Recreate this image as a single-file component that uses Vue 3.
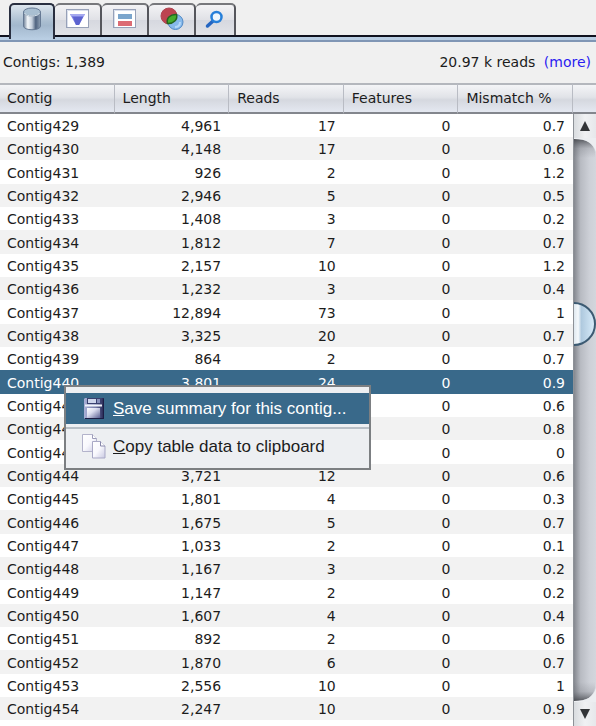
<script setup>
import { ref } from 'vue'

const tabs = ['Contigs', 'Filter', 'Features', 'Colours', 'Find']
const activeTab = ref(0)

const columns = ['Contig', 'Length', 'Reads', 'Features', 'Mismatch %']
const rows = ref([
  [429, '4,961', 17, 0, '0.7'],
  [430, '4,148', 17, 0, '0.6'],
  [431, '926', 2, 0, '1.2'],
  [432, '2,946', 5, 0, '0.5'],
  [433, '1,408', 3, 0, '0.2'],
  [434, '1,812', 7, 0, '0.7'],
  [435, '2,157', 10, 0, '1.2'],
  [436, '1,232', 3, 0, '0.4'],
  [437, '12,894', 73, 0, '1'],
  [438, '3,325', 20, 0, '0.7'],
  [439, '864', 2, 0, '0.7'],
  [440, '3,801', 24, 0, '0.9'],
  [441, '', '', 0, '0.6'],
  [442, '', '', 0, '0.8'],
  [443, '', '', 0, '0'],
  [444, '3,721', 12, 0, '0.6'],
  [445, '1,801', 4, 0, '0.3'],
  [446, '1,675', 5, 0, '0.7'],
  [447, '1,033', 2, 0, '0.1'],
  [448, '1,167', 3, 0, '0.2'],
  [449, '1,147', 2, 0, '0.2'],
  [450, '1,607', 4, 0, '0.4'],
  [451, '892', 2, 0, '0.6'],
  [452, '1,870', 6, 0, '0.7'],
  [453, '2,556', 10, 0, '1'],
  [454, '2,247', 10, 0, '0.9'],
])
const selected = ref(440)
</script>

<template>
  <main class="pane">
    <nav class="tabs" role="tablist">
      <button
        v-for="(name, i) in tabs"
        :key="name"
        class="tab"
        :class="{ active: i === activeTab }"
        role="tab"
        type="button"
        :aria-label="name"
        :aria-selected="i === activeTab"
        @click="activeTab = i"
      >
        <svg v-if="i === 0" width="20" height="24" viewBox="0 0 20 24">
          <defs>
            <linearGradient id="cyl">
              <stop offset="0" stop-color="#6d7f97" />
              <stop offset=".25" stop-color="#f4f8fb" />
              <stop offset=".5" stop-color="#c3cedb" />
              <stop offset=".72" stop-color="#4f637f" />
              <stop offset="1" stop-color="#8fa0b4" />
            </linearGradient>
          </defs>
          <path d="M1.5 5v14c0 5 17 5 17 0V5z" fill="url(#cyl)" stroke="#667a94" />
          <ellipse cx="10" cy="5" rx="8.500" ry="4" fill="#a9bfd1" stroke="#667a94" />
          <path d="M2.500 6c1 4 14 4 15 0" fill="none" stroke="#dbe7ef" />
        </svg>
        <svg v-else-if="i === 1" width="24" height="20" viewBox="0 0 24 20">
          <rect x=".5" y=".5" width="22" height="18" fill="#fff" stroke="#97a1b8" />
          <path d="M1.500 18V1.500H22" fill="none" stroke="#d9dfec" />
          <path d="M4 5h15l-6 11h-3z" fill="#7d82e4" />
          <path d="M7 8h10l-4 8h-3z" fill="#5c63cf" />
          <path d="M4 5h15l-1 2H5z" fill="#a5a9ee" />
        </svg>
        <svg v-else-if="i === 2" width="24" height="20" viewBox="0 0 24 20">
          <rect x=".5" y=".5" width="22" height="18" fill="#fff" stroke="#97a1b8" />
          <path d="M1.500 18V1.500H22" fill="none" stroke="#d9dfec" />
          <rect x="5" y="5" width="14" height="5" fill="#7ba5cc" />
          <rect x="5" y="12" width="14" height="5" fill="#dc6b73" />
        </svg>
        <svg v-else-if="i === 3" width="24" height="24" viewBox="0 0 24 24">
          <circle cx="9" cy="9" r="8" fill="#bd4450" stroke="#b04552" />
          <circle cx="15.500" cy="15" r="7.500" fill="#86b9eb" stroke="#5089c6" />
          <path d="M7.500 16.500C6 11 10.500 7 16.500 7.500c1.500 5-3 9.500-9 9z" fill="#44ac2d" stroke="#24651f" stroke-width="1.500" />
          <path d="M15 20c3 0 5-2 5-5" fill="none" stroke="#b4d8f8" stroke-width="2" />
        </svg>
        <svg v-else width="20" height="19" viewBox="0 0 20 19">
          <path d="M2.500 16l5.500-5" stroke="#2465c1" stroke-width="3.500" stroke-linecap="round" />
          <circle cx="11.500" cy="7" r="5" fill="#eef6fd" stroke="#267fd9" stroke-width="2.500" />
        </svg>
      </button>
    </nav>

    <header class="summary">
      <span>Contigs: 1,389</span>
      <span class="reads">20.97 k reads <a href="#more">(more)</a></span>
    </header>

    <section class="listing">
      <table>
        <thead>
          <tr>
            <th v-for="c in columns" :key="c" scope="col">{{ c }}</th>
          </tr>
        </thead>
        <tbody>
          <tr
            v-for="r in rows"
            :key="r[0]"
            :class="{ selected: r[0] === selected }"
            @click="selected = r[0]"
          >
            <td>Contig{{ r[0] }}</td>
            <td>{{ r[1] }}</td>
            <td>{{ r[2] }}</td>
            <td>{{ r[3] }}</td>
            <td>{{ r[4] }}</td>
          </tr>
        </tbody>
      </table>

      <div class="side">
        <div class="corner"></div>
        <div class="scrollbar">
          <button class="step" type="button" aria-label="Scroll up">
            <svg width="12" height="12" viewBox="0 0 12 12"><path d="M6 1l5 10H1z" fill="#333538" /></svg>
          </button>
          <div class="track">
            <svg class="cap" width="22" height="20" viewBox="0 0 22 20">
              <defs>
                <linearGradient id="shade-top" x2="0" y2="1">
                  <stop offset="0" stop-color="#3c3e43" stop-opacity=".8" />
                  <stop offset=".5" stop-color="#5c5f66" stop-opacity=".2" />
                  <stop offset="1" stop-color="#5c5f66" stop-opacity="0" />
                </linearGradient>
              </defs>
              <path d="M0 1c13 0 19 4 21 13v6H0z" fill="url(#shade-top)" />
              <path d="M0 0h22v14C19 5 13 1 0 1z" fill="#eceef1" />
            </svg>
            <svg class="thumb" width="22" height="44" viewBox="0 0 22 44">
              <defs>
                <linearGradient id="knob">
                  <stop offset="0" stop-color="#dfe8ef" />
                  <stop offset=".2" stop-color="#f5f9fc" />
                  <stop offset=".35" stop-color="#afc9de" />
                  <stop offset="1" stop-color="#d9edfb" />
                </linearGradient>
              </defs>
              <path d="M0 1c11 0 21 9 21 21S11 43 0 43z" fill="url(#knob)" />
              <path d="M0 1c11 0 21 9 21 21S11 43 0 43" fill="none" stroke="#3c5a72" stroke-width="2" />
            </svg>
            <svg class="cap" width="22" height="20" viewBox="0 0 22 20">
              <defs>
                <linearGradient id="shade-bottom" x2="0" y2="1">
                  <stop offset="0" stop-color="#5c5f66" stop-opacity="0" />
                  <stop offset=".5" stop-color="#5c5f66" stop-opacity=".2" />
                  <stop offset="1" stop-color="#3c3e43" stop-opacity=".8" />
                </linearGradient>
              </defs>
              <path d="M0 0h21v6c-2 9-8 13-21 13z" fill="url(#shade-bottom)" />
              <path d="M0 20h22V6C19 15 13 19 0 19z" fill="#eceef1" />
            </svg>
          </div>
          <button class="step" type="button" aria-label="Scroll down">
            <svg width="12" height="12" viewBox="0 0 12 12"><path d="M6 11L1 1h10z" fill="#333538" /></svg>
          </button>
        </div>
      </div>
    </section>

    <div class="menu" role="menu">
      <button class="item current" role="menuitem" type="button">
        <svg class="disk" width="20" height="21" viewBox="0 0 20 21">
          <defs>
            <linearGradient id="disk">
              <stop offset="0" stop-color="#a9b0d6" />
              <stop offset=".6" stop-color="#7379a6" />
              <stop offset="1" stop-color="#20224f" />
            </linearGradient>
            <linearGradient id="label" x2="1" y2="1">
              <stop offset="0" stop-color="#fff" />
              <stop offset=".4" stop-color="#dcdef0" />
              <stop offset="1" stop-color="#5a5f92" />
            </linearGradient>
          </defs>
          <path d="M1 0h19v21H1L0 20V1z" fill="url(#disk)" />
          <path d="M19.500 1v19.500H1" fill="none" stroke="#1c1d45" />
          <rect x="3" y="0" width="14" height="6" fill="#39406f" />
          <rect x="4" y="1" width="8" height="4" fill="#cfd6ec" />
          <rect x="13" y="1" width="3" height="4" fill="#8890bb" />
          <path d="M1 7.500h17" stroke="#f0f3fb" stroke-width="2" />
          <rect x="3" y="10" width="13" height="10" fill="url(#label)" />
        </svg>
        <span><u>S</u>ave summary for this contig...</span>
      </button>
      <hr />
      <button class="item" role="menuitem" type="button">
        <svg width="24" height="25" viewBox="0 0 24 25">
          <defs>
            <linearGradient id="sheet" x2="1" y2="1">
              <stop offset="0" stop-color="#fff" />
              <stop offset=".5" stop-color="#f8f8fd" />
              <stop offset="1" stop-color="#c9c9e2" />
            </linearGradient>
          </defs>
          <path d="M.5.500h10l4 4v13H.5z" fill="url(#sheet)" stroke="#b3b3cb" />
          <path d="M10.500.500v4h4" fill="#fff" stroke="#9c9cb9" />
          <path d="M10.500 7.500h8l4.500 4.500v12H10.500z" fill="url(#sheet)" stroke="#a9a9c6" />
          <path d="M18.500 7.500V12H23" fill="#fff" stroke="#8888ab" />
        </svg>
        <span><u>C</u>opy table data to clipboard</span>
      </button>
    </div>
  </main>
</template>

<style>
body {
  margin: 0;
  background: #fff;
}
</style>

<style scoped>
.pane {
  position: relative;
  display: flex;
  flex-direction: column;
  min-height: 100vh;
  font-family: "DejaVu Sans", sans-serif;
  font-size: 14px;
  color: #1c1c1c;
}
button {
  margin: 0;
  padding: 0;
  border: 0;
  background: none;
  font: inherit;
  color: inherit;
}
svg {
  display: block;
  flex: none;
}
.tabs {
  display: flex;
  align-items: flex-start;
  height: 42px;
  box-sizing: border-box;
  padding: 3px 0 0 9px;
  background: linear-gradient(#f0f0f0 35px, #10121e 35px, #10121e 37px, #b9cee3 37px, #b9cee3 40px, #8096b5 40px);
}
.tab {
  display: flex;
  align-items: center;
  justify-content: center;
  box-sizing: border-box;
  width: 47px;
  height: 32px;
  padding-bottom: 2px;
  border: 2px solid #55565c;
  border-top-color: #77787c;
  border-bottom: 0;
  border-left-width: 0;
  border-radius: 5px 5px 0 0;
  background: linear-gradient(#f3f3f5, #e0e1e6 50%, #d6d8df 51%, #e1e3e8);
}
.tab:last-child {
  width: 40px;
}
.tab.active {
  width: 46px;
  height: 36px;
  padding-bottom: 6px;
  border-left-width: 2px;
  border-color: #292f40;
  background: linear-gradient(#dce5ed, #a9bdd0 50%, #a3b8cd 60%, #b9cee3);
}
.summary {
  display: flex;
  align-items: center;
  justify-content: space-between;
  box-sizing: border-box;
  height: 41px;
  padding: 0 5px 2px 3px;
  background: #f0f0f0;
}
.reads a {
  margin-left: 4px;
  color: #2a1cf0;
  text-decoration: none;
}
.listing {
  display: grid;
  grid-template-columns: minmax(0, 1fr) 23px;
  flex: 1;
}
table {
  width: 100%;
  align-self: start;
  border-collapse: separate;
  border-spacing: 0;
  table-layout: fixed;
}
th,
.corner {
  box-sizing: border-box;
  height: 31px;
  border-top: 2px solid #b4b7bd;
  border-bottom: 2px solid #83868d;
  background: linear-gradient(#f4f5f7, #e1e3e8 45%, #d5d8df 55%, #e4e8f1);
}
th {
  padding: 0 8px 2px;
  border-right: 1px solid #b9bcc4;
  font-weight: 400;
  text-align: left;
}
th:first-child {
  padding-left: 7px;
}
td {
  box-sizing: border-box;
  height: 23px;
  padding: 2px 8px 0;
  line-height: 21px;
  text-align: right;
}
tr:nth-child(3n) td {
  height: 24px;
}
td:first-child {
  padding-left: 7px;
  text-align: left;
}
tbody tr:nth-child(even) {
  background: #f2f2f2;
}
tbody tr.selected {
  background: #39698a;
  color: #fff;
}
.side {
  display: flex;
  flex-direction: column;
}
.scrollbar {
  display: flex;
  flex-direction: column;
  flex: 1;
  border-left: 1px solid #8d9197;
}
.step {
  display: flex;
  align-items: center;
  justify-content: center;
  height: 24px;
  background: linear-gradient(90deg, #d9dcdf, #f0f1f3 50%, #e6e8eb);
}
.track {
  display: flex;
  flex-direction: column;
  justify-content: space-between;
  flex: 1;
  background: linear-gradient(90deg, #85888f, #b8bbc2 30%, #cdd0d7 70%, #d3d6dc);
}
.thumb {
  margin-bottom: 192px;
}
.menu {
  position: absolute;
  top: 385px;
  left: 64px;
  box-sizing: border-box;
  width: 307px;
  padding: 6px 0;
  border: 2px solid #7c7f82;
  background: #edeff2;
  font-family: "Liberation Sans", Arial, sans-serif;
  font-size: 17px;
}
.item {
  display: grid;
  grid-template-columns: 24px 1fr;
  align-items: center;
  justify-items: start;
  gap: 7px;
  width: 100%;
  height: 31px;
  padding: 0 16px;
  white-space: nowrap;
}
.item.current {
  background: #39698a;
  color: #fff;
}
.disk {
  justify-self: center;
}
.menu hr {
  height: 2px;
  margin: 3px 0 2px;
  border: 0;
  background: #b8bfc6;
}
</style>
